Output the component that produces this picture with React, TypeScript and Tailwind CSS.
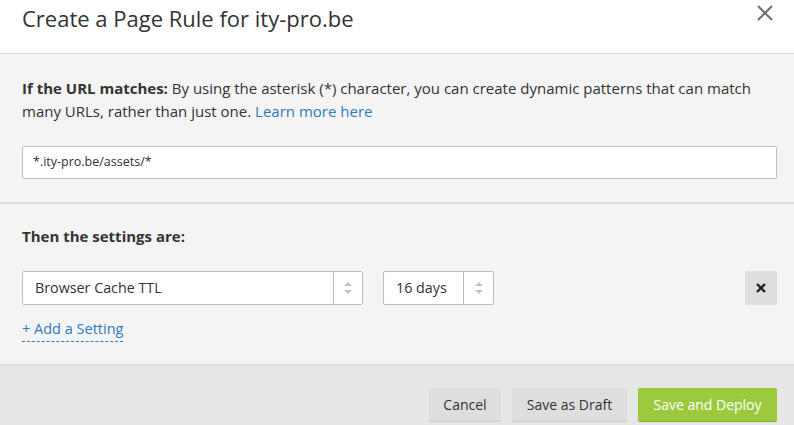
const font = { fontFamily: '"Open Sans", "Noto Sans", sans-serif' };

function Arrows() {
  return (
    <svg width="8" height="12" viewBox="0 0 8 12" className="fill-[#c4c4c4]">
      <path d="M4 0 L8 4 H0 Z" />
      <path d="M4 12 L8 8 H0 Z" />
    </svg>
  );
}

function Select({ label, width, btn }: { label: string; width: string; btn: string }) {
  return (
    <div className={`flex h-[34px] ${width} rounded-[2px] border border-[#bdbdbd] bg-white`}>
      <div className="flex flex-1 items-center pl-[12px] text-[14.3px] text-[#333]">{label}</div>
      <div className={`flex ${btn} items-center justify-center border-l border-[#bdbdbd]`}>
        <Arrows />
      </div>
    </div>
  );
}

export default function App() {
  return (
    <div className="flex h-[425px] w-[794px] flex-col overflow-hidden bg-white text-[#333]" style={font}>
      {/* header */}
      <div className="flex h-[54px] items-start justify-between border-b border-[#dcdcdc] pl-[22px] pr-[21px]">
        <h1 className="pt-[2px] text-[22px] leading-[32px] text-[#333]">Create a Page Rule for ity-pro.be</h1>
        <svg width="16" height="16" viewBox="0 0 16 16" className="mt-[5px] stroke-[#6f6f6f]" strokeWidth="2">
          <path d="M1 1 L15 15 M15 1 L1 15" />
        </svg>
      </div>

      {/* url section */}
      <div className="h-[150px] border-b-2 border-[#dcdcdc] bg-[#f4f4f4] pl-[22px] pr-[17px] pt-[23px]">
        <p className="text-[15px] leading-[23px]">
          <span className="font-bold">If the URL matches:</span> By using the asterisk (*) character, you can create
          dynamic patterns that can match many URLs, rather than just one.{" "}
          <span className="text-[#2f7bbf]">Learn more here</span>
        </p>
        <div className="mt-[23px] flex h-[33px] items-center rounded-[2px] border border-[#bdbdbd] bg-white pl-[10px] text-[12.5px]">
          *.ity-pro.be/assets/*
        </div>
      </div>

      {/* settings */}
      <div className="flex h-[160px] flex-col bg-[#f4f4f4] pl-[22px] pr-[17px] pt-[22px]">
        <p className="text-[15px] font-bold leading-[20px]">Then the settings are:</p>
        <div className="mt-[25px] flex items-center">
          <Select label="Browser Cache TTL" width="w-[341px]" btn="w-[29px]" />
          <div className="w-[20px]" />
          <Select label="16 days" width="w-[111px]" btn="w-[30px]" />
          <div className="flex-1" />
          <div className="flex h-[34px] w-[32px] items-center justify-center rounded-[2px] bg-[#dedede]">
            <svg width="10" height="10" viewBox="0 0 10 10" className="stroke-[#222]" strokeWidth="2.4">
              <path d="M1 1 L9 9 M9 1 L1 9" />
            </svg>
          </div>
        </div>
        <div className="mt-[11px]">
          <span className="inline-block border-b border-dashed border-[#2f7bbf] pb-[2px] text-[14.5px] leading-[20px] text-[#2f7bbf]">
            + Add a Setting
          </span>
        </div>
      </div>

      {/* footer */}
      <div className="flex flex-1 items-start justify-end gap-[11px] border-t border-[#d9d9d9] bg-[#e6e6e6] pr-[17px] pt-[23px]">
        <button className="h-[33px] w-[72px] rounded-[2px] bg-[#dedede] text-[14px] text-[#333] shadow-[0_1px_0_#c8c8c8]">
          Cancel
        </button>
        <button className="h-[33px] w-[115px] rounded-[2px] bg-[#dedede] text-[14px] text-[#333] shadow-[0_1px_0_#c8c8c8]">
          Save as Draft
        </button>
        <button className="h-[33px] w-[139px] rounded-[2px] bg-[#9bca3e] text-[14px] text-white shadow-[0_1px_0_#86b02f]">
          Save and Deploy
        </button>
      </div>
    </div>
  );
}
